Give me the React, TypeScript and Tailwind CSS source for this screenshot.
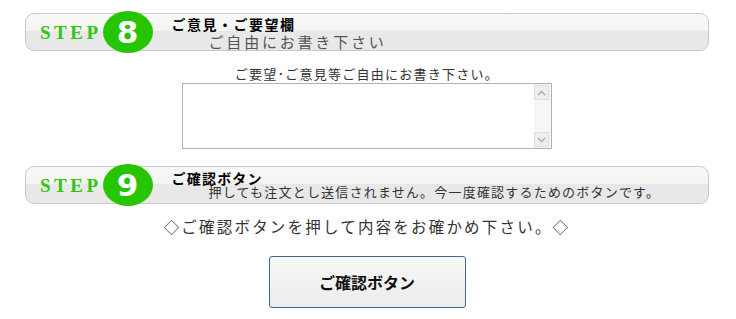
import React from "react";

const jp = { fontFamily: '"Noto Sans CJK JP", "Noto Sans", sans-serif' };

function StepHeader({
  num,
  title,
  sub,
  subClass,
  titleClass,
  subPad,
}: {
  num: string;
  title: string;
  sub: string;
  subClass: string;
  titleClass: string;
  subPad: string;
}) {
  return (
    <div className="w-[684px] h-[38px] rounded-[9px] border border-[#c9c9c9] bg-[linear-gradient(to_bottom,#f8f8f6_0%,#f4f4f2_47%,#e8e8e8_47%,#e8e8e8_100%)] flex items-center pl-[14px]">
      <span
        className="text-[19px] font-bold text-[#2fc60f] tracking-[3.5px] leading-none"
        style={{ fontFamily: '"Liberation Serif", serif' }}
      >
        STEP
      </span>
      <div className="ml-[1px] w-[50px] h-[42px] -my-[2px] rounded-[50%] bg-[#27c400] flex items-center justify-center shrink-0">
        <span
          className="text-white font-bold text-[31px] leading-none"
          style={{ fontFamily: '"DejaVu Sans", sans-serif' }}
        >
          {num}
        </span>
      </div>
      <div className="ml-[19px] flex flex-col" style={jp}>
        <span className={titleClass}>{title}</span>
        <span className={subClass + " " + subPad}>{sub}</span>
      </div>
    </div>
  );
}

export default function App() {
  return (
    <div className="w-[736px] h-[319px] bg-white overflow-hidden">
      <div className="ml-[25px] w-[684px] pt-[13px] flex flex-col items-center">
        <StepHeader
          num="8"
          title="ご意見・ご要望欄"
          titleClass="text-[14px] font-bold text-black leading-[17px] tracking-[1.5px] pt-[1px]"
          sub="ご自由にお書き下さい"
          subClass="text-[15px] text-[#555] leading-[17px] tracking-[2.8px]"
          subPad="pl-[37px]"
        />
        <div
          className="mt-[15px] text-[13px] leading-[16px] text-[#333] tracking-[1.25px]"
          style={jp}
        >
          ご要望･ご意見等ご自由にお書き下さい。
        </div>
        <div className="mt-[1px] w-[370px] h-[66px] border border-[#a7b3c3] bg-white flex">
          <textarea className="flex-1 h-full resize-none outline-none border-0 bg-white" />
          <div className="w-[17px] h-full py-[1px] pr-[1px] flex flex-col justify-between bg-[#f6f6f6]">
            <div className="h-[15px] w-[15px] border border-[#dedede] bg-[#eeefed] flex items-center justify-center">
              <svg width="9" height="6" viewBox="0 0 9 6">
                <path d="M1 5 L4.5 1.5 L8 5" fill="none" stroke="#a8a8a8" strokeWidth="1.3" />
              </svg>
            </div>
            <div className="h-[15px] w-[15px] border border-[#dedede] bg-[#eeefed] flex items-center justify-center">
              <svg width="9" height="6" viewBox="0 0 9 6">
                <path d="M1 1 L4.5 4.5 L8 1" fill="none" stroke="#a8a8a8" strokeWidth="1.3" />
              </svg>
            </div>
          </div>
        </div>
        <div className="mt-[17px]">
          <StepHeader
            num="9"
            title="ご確認ボタン"
            titleClass="text-[14px] font-bold text-black leading-[14px] tracking-[1.2px]"
            sub="押しても注文とし送信されません。今一度確認するためのボタンです。"
            subClass="text-[13px] text-[#333] leading-[14px] tracking-[1.2px]"
            subPad="pl-[37px]"
          />
        </div>
        <div
          className="mt-[12px] text-[15.5px] leading-[20px] text-[#333] tracking-[2.2px]"
          style={jp}
        >
          ◇ご確認ボタンを押して内容をお確かめ下さい。◇
        </div>
        <button
          className="mt-[20px] w-[197px] h-[52px] rounded-[3px] border border-[#47678c] bg-[linear-gradient(to_bottom,#f7f7f5,#ececea)] text-[16px] font-bold text-[#111] flex items-center justify-center"
          style={jp}
        >
          ご確認ボタン
        </button>
      </div>
    </div>
  );
}
